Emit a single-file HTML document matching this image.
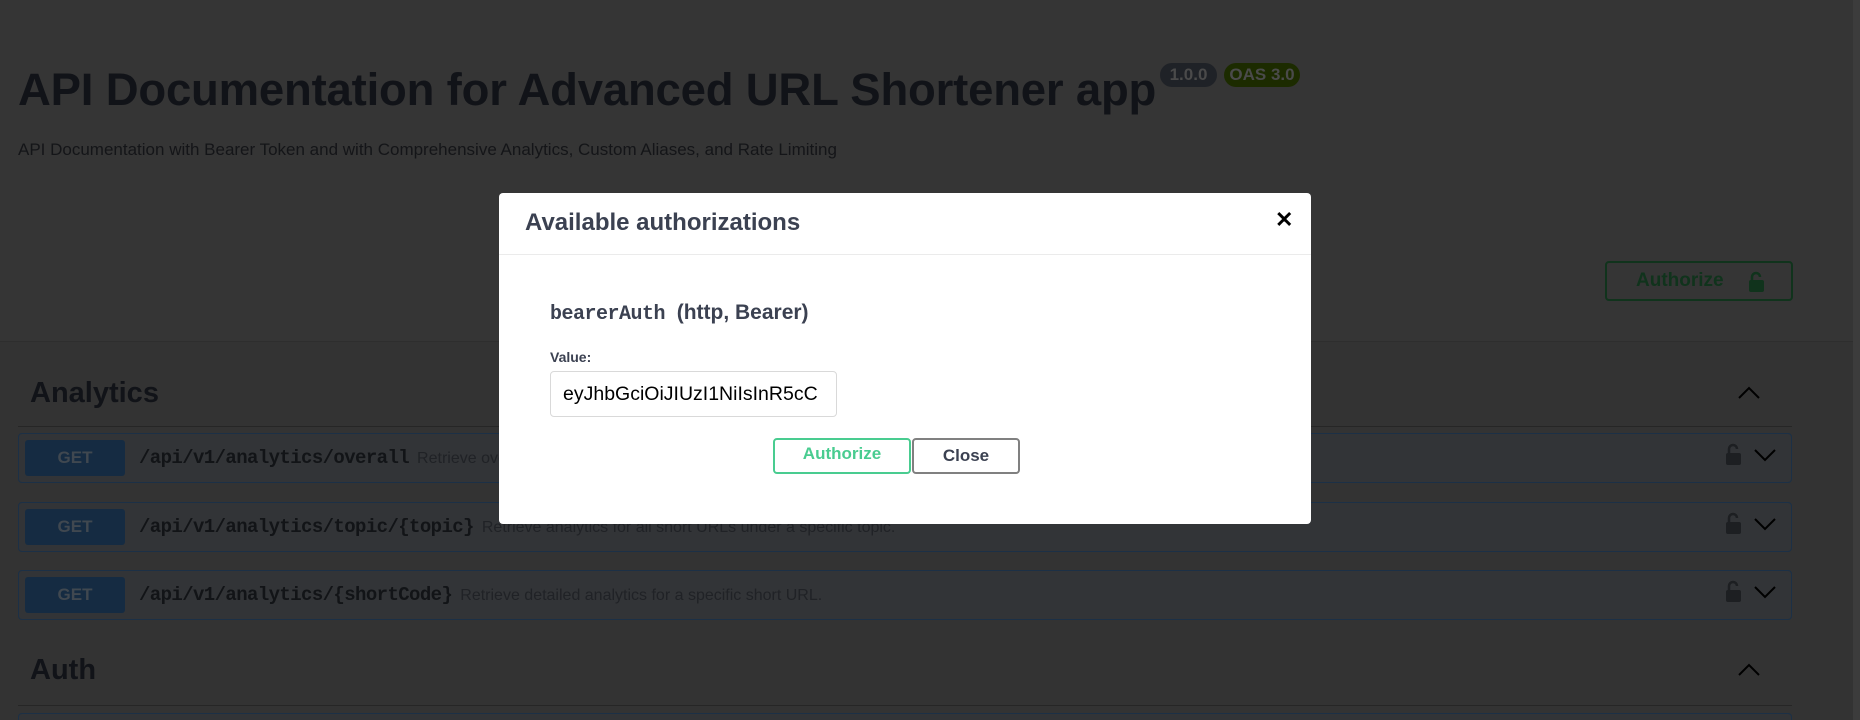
<!DOCTYPE html>
<html><head><meta charset="utf-8"><style>
*{margin:0;padding:0;box-sizing:border-box}
html,body{width:1860px;height:720px;overflow:hidden}
body{background:#333;font-family:"Liberation Sans",sans-serif;position:relative}
.abs{position:absolute}
.mono{font-family:"Liberation Mono","DejaVu Sans Mono",monospace}
.top{left:0;top:0;width:1853px;height:342px;background:#353535;border-bottom:1px solid #2e2e2e}
h1{position:absolute;left:18px;top:64px;font-size:45.5px;font-weight:bold;color:#111318;white-space:nowrap;letter-spacing:-0.2px}
.badge{position:absolute;top:63px;height:24px;border-radius:12px;color:#4a4a4a;font-weight:bold;font-size:17px;line-height:24px;text-align:center}
.sub{left:18px;top:140px;font-size:17px;color:#141518;white-space:nowrap}
.authbtn{left:1605px;top:261px;width:188px;height:40px;border:2px solid #10331c;border-radius:4px;color:#10331c;font-weight:bold;font-size:19px;line-height:36px;padding-left:29px}
.sec{left:30px;font-size:29px;font-weight:bold;color:#111318}
.line{left:18px;width:1774px;height:1px;background:#262626}
.op{left:18px;width:1774px;height:50px;border:1px solid #1c3046;border-radius:4px;background:#323437}
.get{position:absolute;left:6px;top:6px;width:100px;height:36px;background:#152b42;border-radius:3px;color:#404850;font-weight:bold;font-size:17px;line-height:36px;text-align:center}
.path{position:absolute;left:120px;top:13px;font-size:19px;font-weight:bold;color:#121417;white-space:nowrap;letter-spacing:-0.6px}
.path span{font-family:"Liberation Sans",sans-serif;font-weight:normal;font-size:16px;color:#202226;margin-left:8px;letter-spacing:0}
.scroll{left:1853px;top:0;width:7px;height:720px;background:#3c3c3c}
.modal{left:499px;top:193px;width:812px;height:331px;background:#fff;border-radius:4px}
</style></head><body>
<div class="abs top"></div>
<h1>API Documentation for Advanced URL Shortener app</h1>
<div class="badge" style="left:1160px;width:57px;background:#1f2227">1.0.0</div>
<div class="badge" style="left:1224px;width:76px;background:#1c2b00">OAS 3.0</div>
<div class="abs sub">API Documentation with Bearer Token and with Comprehensive Analytics, Custom Aliases, and Rate Limiting</div>
<div class="abs authbtn">Authorize
<svg class="abs" style="left:140px;top:8px" width="20" height="22" viewBox="0 0 20 22"><path d="M5 9V6a4 4 0 0 1 8 0" fill="none" stroke="#10331c" stroke-width="2.5"/><rect x="2" y="9" width="15" height="12" rx="2" fill="#10331c"/></svg></div>

<div class="abs sec" style="top:377px">Analytics</div>
<svg class="abs" style="left:1737px;top:386px" width="24" height="14"><path d="M2 12L12 2L22 12" fill="none" stroke="#000" stroke-width="2"/></svg>
<div class="abs line" style="top:426px"></div>

<div class="abs op" style="top:433px"><div class="get">GET</div><div class="path mono">/api/v1/analytics/overall<span>Retrieve overall analytics for all short URLs created by the user.</span></div></div>
<div class="abs op" style="top:502px"><div class="get">GET</div><div class="path mono">/api/v1/analytics/topic/{topic}<span>Retrieve analytics for all short URLs under a specific topic.</span></div></div>
<div class="abs op" style="top:570px"><div class="get">GET</div><div class="path mono">/api/v1/analytics/{shortCode}<span>Retrieve detailed analytics for a specific short URL.</span></div></div>

<svg class="abs" style="left:1724px;top:443px" width="20" height="24"><path d="M5 11V6a4 4 0 0 1 8 0" fill="none" stroke="#1d1f22" stroke-width="2.5"/><rect x="2" y="10" width="15" height="12" rx="2" fill="#1d1f22"/></svg>
<svg class="abs" style="left:1753px;top:448px" width="24" height="14"><path d="M2 2L12 12L22 2" fill="none" stroke="#000" stroke-width="2"/></svg>
<svg class="abs" style="left:1724px;top:512px" width="20" height="24"><path d="M5 11V6a4 4 0 0 1 8 0" fill="none" stroke="#1d1f22" stroke-width="2.5"/><rect x="2" y="10" width="15" height="12" rx="2" fill="#1d1f22"/></svg>
<svg class="abs" style="left:1753px;top:517px" width="24" height="14"><path d="M2 2L12 12L22 2" fill="none" stroke="#000" stroke-width="2"/></svg>
<svg class="abs" style="left:1724px;top:580px" width="20" height="24"><path d="M5 11V6a4 4 0 0 1 8 0" fill="none" stroke="#1d1f22" stroke-width="2.5"/><rect x="2" y="10" width="15" height="12" rx="2" fill="#1d1f22"/></svg>
<svg class="abs" style="left:1753px;top:585px" width="24" height="14"><path d="M2 2L12 12L22 2" fill="none" stroke="#000" stroke-width="2"/></svg>

<div class="abs sec" style="top:654px">Auth</div>
<svg class="abs" style="left:1737px;top:663px" width="24" height="14"><path d="M2 12L12 2L22 12" fill="none" stroke="#000" stroke-width="2"/></svg>
<div class="abs line" style="top:705px"></div>
<div class="abs" style="left:18px;top:713px;width:1774px;height:7px;border:1px solid #1c3046;border-bottom:none;border-radius:4px 4px 0 0;background:#323437;overflow:hidden"><div style="position:absolute;left:6px;top:6px;width:100px;height:2px;background:#152b42"></div></div>
<div class="abs scroll"></div>

<div class="abs modal">
  <div class="abs" style="left:26px;top:16px;font-size:24px;font-weight:bold;color:#3b4151">Available authorizations</div>
  <div class="abs" style="left:776px;top:14px;font-size:22px;font-weight:bold;color:#000">✕</div>
  <div class="abs" style="left:0;top:61px;width:812px;height:1px;background:#ebebeb"></div>
  <div class="abs" style="left:51px;top:108px;font-size:21px;font-weight:bold;color:#3b4151;white-space:nowrap"><span class="mono" style="font-size:20px;letter-spacing:-0.5px">bearerAuth</span>&nbsp; (http, Bearer)</div>
  <div class="abs" style="left:51px;top:156px;font-size:14px;font-weight:bold;color:#3b4151">Value:</div>
  <div class="abs" style="left:51px;top:178px;width:287px;height:46px;border:1px solid #d9d9d9;border-radius:4px;font-size:19.5px;line-height:44px;padding-left:12px;color:#000;overflow:hidden;white-space:nowrap">eyJhbGciOiJIUzI1NiIsInR5cC</div>
  <div class="abs" style="left:274px;top:245px;width:138px;height:36px;border:2px solid #49cc90;border-radius:4px;color:#49cc90;font-weight:bold;font-size:17px;text-align:center;line-height:28px">Authorize</div>
  <div class="abs" style="left:413px;top:245px;width:108px;height:36px;border:2px solid #808080;border-radius:4px;color:#3b4151;font-weight:bold;font-size:17px;text-align:center;line-height:32px">Close</div>
</div>
</body></html>
